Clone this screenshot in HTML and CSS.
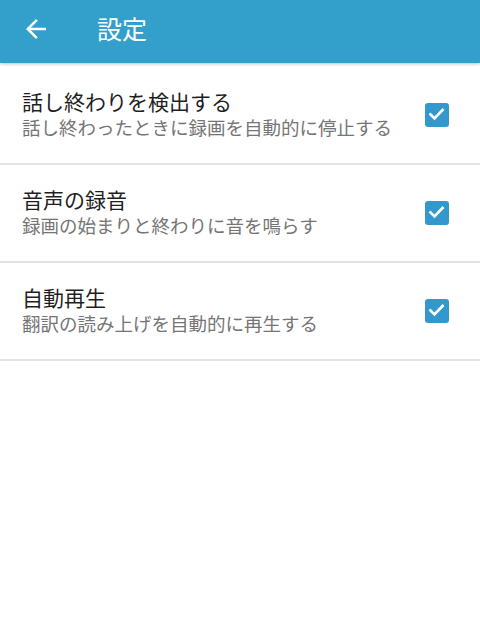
FILE: index.html
```html
<!DOCTYPE html>
<html lang="ja">
<head>
<meta charset="utf-8">
<link rel="stylesheet" href="styles.css">
</head>
<body>
<header class="appbar">
  <svg class="back" width="30" height="30" viewBox="0 0 24 24"><path d="M20 11H7.83l5.59-5.59L12 4l-8 8 8 8 1.41-1.41L7.83 13H20v-2z" fill="#fff"/></svg>
  <h1 class="title">設定</h1>
</header>
<main class="list">
  <div class="row">
    <div class="texts">
      <div class="primary">話し終わりを検出する</div>
      <div class="secondary">話し終わったときに録画を自動的に停止する</div>
    </div>
    <span class="check"><svg width="24" height="24" viewBox="0 0 24 24"><path d="M4.5 10.5l5 5 9-9.5" fill="none" stroke="#fff" stroke-width="2.6"/></svg></span>
  </div>
  <div class="row">
    <div class="texts">
      <div class="primary">音声の録音</div>
      <div class="secondary">録画の始まりと終わりに音を鳴らす</div>
    </div>
    <span class="check"><svg width="24" height="24" viewBox="0 0 24 24"><path d="M4.5 10.5l5 5 9-9.5" fill="none" stroke="#fff" stroke-width="2.6"/></svg></span>
  </div>
  <div class="row">
    <div class="texts">
      <div class="primary">自動再生</div>
      <div class="secondary">翻訳の読み上げを自動的に再生する</div>
    </div>
    <span class="check"><svg width="24" height="24" viewBox="0 0 24 24"><path d="M4.5 10.5l5 5 9-9.5" fill="none" stroke="#fff" stroke-width="2.6"/></svg></span>
  </div>
</main>
</body>
</html>
```
FILE: styles.css
```css
html, body {
  margin: 0;
  padding: 0;
  background: #fff;
  font-family: "Noto Sans CJK JP", "Noto Sans", sans-serif;
}
.appbar {
  height: 63px;
  background: #33a0cc;
  display: flex;
  align-items: center;
  padding-left: 21px;
  box-shadow: 0 1px 3px rgba(0,0,0,0.25);
  position: relative;
}
.back {
  display: block;
  margin-top: -6px;
}
.title {
  margin: -6px 0 0 46px;
  color: #fff;
  font-size: 25px;
  font-weight: 400;
  line-height: 1;
}
.list {
  padding-top: 4px;
}
.row {
  height: 96px;
  border-bottom: 2px solid #e3e3e3;
  display: flex;
  align-items: center;
  padding: 0 31px 0 22px;
}
.texts {
  flex: 1;
  margin-top: -2px;
}
.primary {
  font-size: 21px;
  line-height: 27px;
  color: #1f1f1f;
}
.secondary {
  font-size: 18.5px;
  line-height: 25px;
  color: #757575;
}
.check {
  width: 24px;
  height: 24px;
  border-radius: 3px;
  background: #3399cc;
  display: block;
}
.check svg { display: block; }
```
